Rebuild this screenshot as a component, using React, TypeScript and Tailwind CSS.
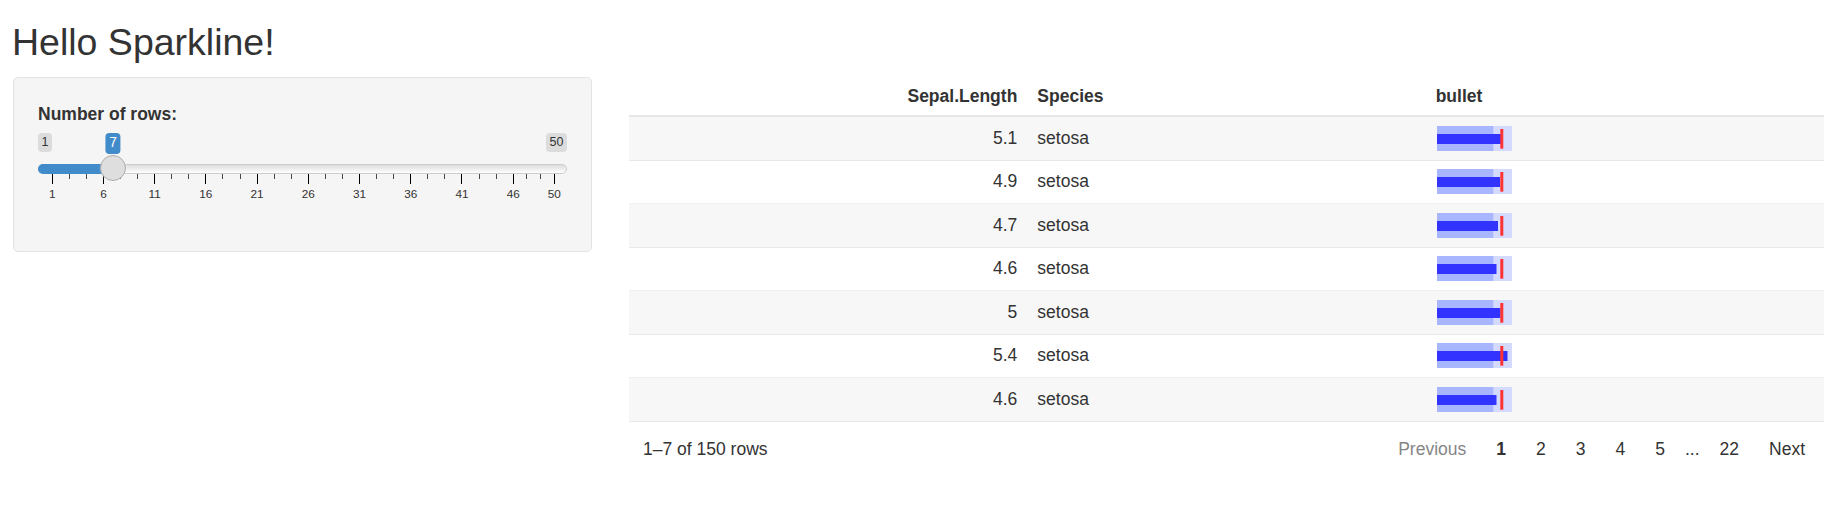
import React from "react";

type Row = { length: string; bar: number };

const rows: Row[] = [
  { length: "5.1", bar: 64 },
  { length: "4.9", bar: 63 },
  { length: "4.7", bar: 61 },
  { length: "4.6", bar: 59.5 },
  { length: "5", bar: 63.5 },
  { length: "5.4", bar: 70.5 },
  { length: "4.6", bar: 59.5 },
];

const majors = [1, 6, 11, 16, 21, 26, 31, 36, 41, 46, 50];
const tickX = (v: number) => 13.7 + (v - 1) * 10.245;

function Bullet({ bar }: { bar: number }) {
  return (
    <svg width="75" height="25" viewBox="0 0 75 25" className="block">
      <rect x="0" y="0" width="75" height="25" fill="#d3dafe" />
      <rect x="0" y="0" width="56.3" height="25" fill="#a8b6ff" />
      <rect x="0" y="8" width={bar} height="10" fill="#3333ff" />
      <rect x="63.3" y="3" width="3" height="19.7" fill="#ff3333" />
    </svg>
  );
}

function Slider() {
  const minors: number[] = [];
  for (let i = 0; i < majors.length - 1; i++) {
    const a = tickX(majors[i]);
    const b = tickX(majors[i + 1]);
    minors.push(a + (b - a) / 3, a + (2 * (b - a)) / 3);
  }
  const handle = tickX(7);

  return (
    <div className="relative h-[73px] w-[529px]">
      {/* min / value / max labels */}
      <span className="absolute left-0 top-0 h-[18.5px] rounded-[4px] bg-black/10 px-[3.5px] text-[12.5px] leading-[18.5px] text-[#333]">
        1
      </span>
      <span
        className="absolute top-0 h-[20.5px] -translate-x-1/2 rounded-[4px] bg-[#428bca] px-[3.75px] text-[13.75px] leading-[20.5px] text-white"
        style={{ left: handle }}
      >
        7
      </span>
      <span className="absolute right-0 top-0 h-[18.5px] rounded-[4px] bg-black/10 px-[3.5px] text-[12.5px] leading-[18.5px] text-[#333]">
        50
      </span>

      {/* track */}
      <div className="absolute left-0 right-0 top-[31px] h-[10px] rounded-full border border-[#cccccc] bg-linear-to-b from-[#dddddd] to-white" />
      <div
        className="absolute left-0 top-[31px] h-[10px] rounded-l-full bg-[#428bca]"
        style={{ width: handle }}
      />

      {/* grid */}
      {majors.map((v) => (
        <div
          key={"M" + v}
          className="absolute top-[41px] h-[10px] w-px bg-black"
          style={{ left: Math.round(tickX(v)) }}
        />
      ))}
      {minors.map((x, i) => (
        <div
          key={"m" + i}
          className="absolute top-[41px] h-[5px] w-px bg-black/70"
          style={{ left: Math.round(x) }}
        />
      ))}
      {majors.map((v) => (
        <span
          key={"L" + v}
          className="absolute top-[54px] -translate-x-1/2 text-[11.75px] leading-[14px] text-[#333]"
          style={{ left: tickX(v) + 0.5 }}
        >
          {v}
        </span>
      ))}

      {/* handle */}
      <div
        className="absolute top-[22px] h-[26px] w-[26px] -translate-x-1/2 rounded-full border border-[#ababab] bg-[#dedede] shadow-[1px_1px_3px_rgba(255,255,255,0.3)]"
        style={{ left: handle }}
      />
    </div>
  );
}

export default function App() {
  return (
    <div className="min-h-screen bg-white font-['Liberation_Sans',Arial,sans-serif] text-[17.5px] leading-[25px] text-[#333]">
      <h2 className="pl-[12px] pt-[22px] text-[37.5px] font-normal leading-[41px]">Hello Sparkline!</h2>

      <div className="mt-[14px] flex items-start">
        <aside className="ml-[13px] w-[579px] shrink-0 rounded-[5px] border border-[#e3e3e3] bg-[#f5f5f5] p-[24px]">
          <label className="block font-bold">Number of rows:</label>
          <div className="mb-[21px] mt-[6px]">
            <Slider />
          </div>
        </aside>

        <main className="ml-[37px] flex-1">
          <div className="grid h-[40px] grid-cols-3 items-center border-b-2 border-[#e6e6e6] font-bold">
            <div className="px-[10px] text-right">Sepal.Length</div>
            <div className="px-[10px]">Species</div>
            <div className="px-[10px]">bullet</div>
          </div>

          {rows.map((r, i) => (
            <div
              key={i}
              className={
                "grid h-[43.5px] grid-cols-3 items-center border-b border-black/[0.06] " +
                (i % 2 === 0 ? "bg-[#f7f7f7]" : "bg-white")
              }
            >
              <div className="px-[10px] text-right">{r.length}</div>
              <div className="px-[10px]">setosa</div>
              <div className="pl-[11px]">
                <Bullet bar={r.bar} />
              </div>
            </div>
          ))}

          <div className="flex h-[55px] items-center justify-between pl-[14px] pr-[9px]">
            <span>1–7 of 150 rows</span>
            <div className="flex items-center gap-[10px]">
              <span className="px-[10px] text-[#858585]">Previous</span>
              <span className="px-[10px] font-bold">1</span>
              <span className="px-[10px]">2</span>
              <span className="px-[10px]">3</span>
              <span className="px-[10px]">4</span>
              <span className="px-[10px]">5</span>
              <span>...</span>
              <span className="px-[10px]">22</span>
              <span className="px-[10px]">Next</span>
            </div>
          </div>
        </main>
      </div>
    </div>
  );
}
